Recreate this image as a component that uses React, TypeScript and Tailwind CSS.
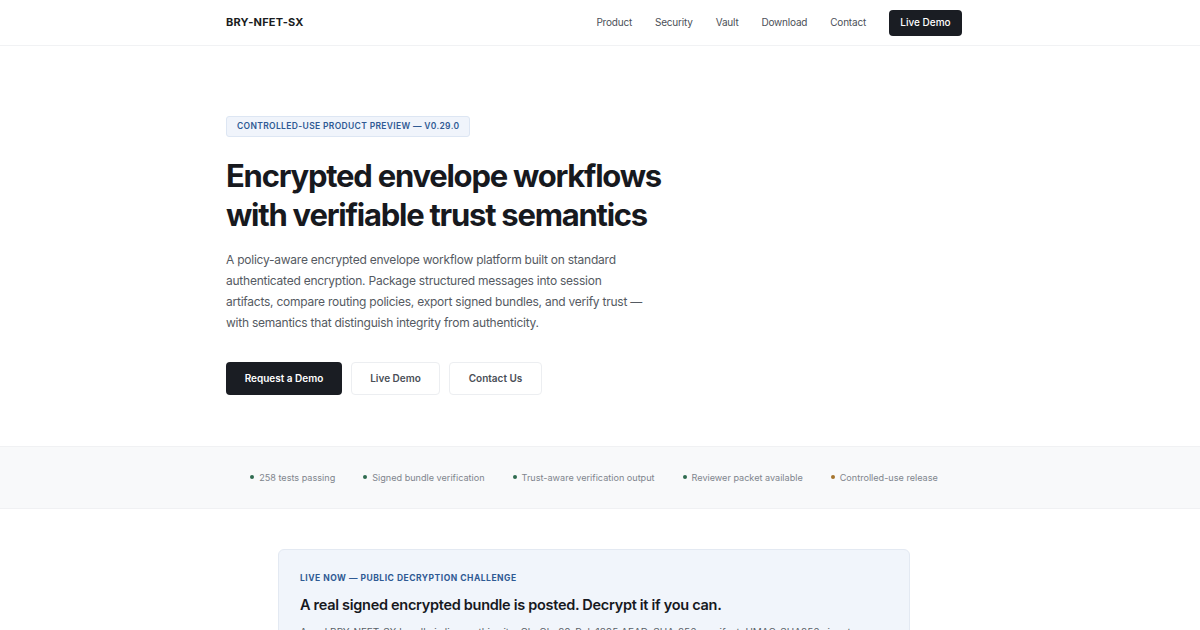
import React from 'react';

const navLinks = ['Product', 'Security', 'Vault', 'Download', 'Contact'];

const stats = [
  { label: '258 tests passing', tone: 'bg-[#2f6b4f]' },
  { label: 'Signed bundle verification', tone: 'bg-[#2f6b4f]' },
  { label: 'Trust-aware verification output', tone: 'bg-[#2f6b4f]' },
  { label: 'Reviewer packet available', tone: 'bg-[#2f6b4f]' },
  { label: 'Controlled-use release', tone: 'bg-[#a5742c]' },
];

const App: React.FC = () => {
  return (
    <div className="min-h-screen bg-white text-[#16181d] font-['Inter','Liberation_Sans',sans-serif] antialiased">
      {/* Top nav */}
      <header className="border-b border-[#f1f2f4] bg-white">
        <div className="pr-3">
          <div className="mx-auto flex h-[45px] w-[736px] items-center justify-between">
            <span className="text-[11px] font-bold tracking-[0.02em] text-[#1a1c21]">BRY-NFET-SX</span>
            <nav className="flex items-center">
              <div className="flex items-center gap-[23px] text-[10px] tracking-[-0.02em] text-[#4b5058]">
                {navLinks.map((link) => (
                  <a key={link} href="#" className="hover:text-black">
                    {link}
                  </a>
                ))}
              </div>
              <button className="ml-[23px] h-[26px] w-[73px] rounded-[4px] bg-[#1a1d23] text-[10px] font-medium text-white">
                Live Demo
              </button>
            </nav>
          </div>
        </div>
      </header>

      {/* Hero */}
      <section className="pr-3">
        <div className="mx-auto w-[736px] pt-[65px] pb-[51px]">
          <span className="inline-flex h-[21px] items-center rounded-[3px] border border-[#dde6f3] bg-[#f0f4fb] px-[10px] text-[8.5px] font-semibold tracking-[0.04em] text-[#2f5a94]">
            CONTROLLED-USE PRODUCT PREVIEW — V0.29.0
          </span>
          <h1 className="mt-[19px] text-[31px] font-bold leading-[39px] tracking-[-0.04em] text-[#17191e]">
            Encrypted envelope workflows
            <br />
            with verifiable trust semantics
          </h1>
          <p className="mt-[15px] w-[425px] text-[12px] leading-[21px] tracking-[-0.02em] text-[#555a62]">
            A policy-aware encrypted envelope workflow platform built on standard authenticated encryption. Package
            structured messages into session artifacts, compare routing policies, export signed bundles, and verify
            trust — with semantics that distinguish integrity from authenticity.
          </p>
          <div className="mt-[29px] flex gap-[9px]">
            <button className="h-[33px] w-[116px] rounded-[4px] bg-[#1a1d23] text-[10px] font-semibold text-white">
              Request a Demo
            </button>
            <button className="h-[33px] w-[89px] rounded-[4px] border border-[#eceef1] bg-white text-[10px] font-semibold text-[#4a4f57]">
              Live Demo
            </button>
            <button className="h-[33px] w-[93px] rounded-[4px] border border-[#eceef1] bg-white text-[10px] font-semibold text-[#4a4f57]">
              Contact Us
            </button>
          </div>
        </div>
      </section>

      {/* Status strip */}
      <section className="border-y border-[#f0f1f3] bg-[#f8f9fa]">
        <div className="pr-3">
          <ul className="flex h-[61px] items-center justify-center gap-[28px] text-[9.1px] text-[#80858d]">
            {stats.map((s) => (
              <li key={s.label} className="flex items-center gap-[5px]">
                <span className={`h-[4px] w-[4px] rounded-full ${s.tone}`} />
                {s.label}
              </li>
            ))}
          </ul>
        </div>
      </section>

      {/* Challenge callout */}
      <section className="pr-3">
        <div className="mx-auto mt-[40px] w-[632px] rounded-[6px] border border-[#e3e9f2] bg-[#f1f5fb] px-[21px] pt-[22px] pb-6">
          <p className="text-[8.5px] font-bold tracking-[0.06em] text-[#2f5a94]">
            LIVE NOW — PUBLIC DECRYPTION CHALLENGE
          </p>
          <h2 className="mt-[9px] text-[14.5px] font-semibold tracking-[-0.02em] text-[#17191e]">
            A real signed encrypted bundle is posted. Decrypt it if you can.
          </h2>
          <p className="mt-[8px] text-[10px] leading-[18px] text-[#5a5f67]">
            A real BRY-NFET-SX bundle is live on this site. ChaCha20-Poly1305 AEAD, SHA-256 manifest, HMAC-SHA256
            signature. The ciphertext, manifest and signature are public; the key is not.
          </p>
        </div>
      </section>
    </div>
  );
};

export default App;
